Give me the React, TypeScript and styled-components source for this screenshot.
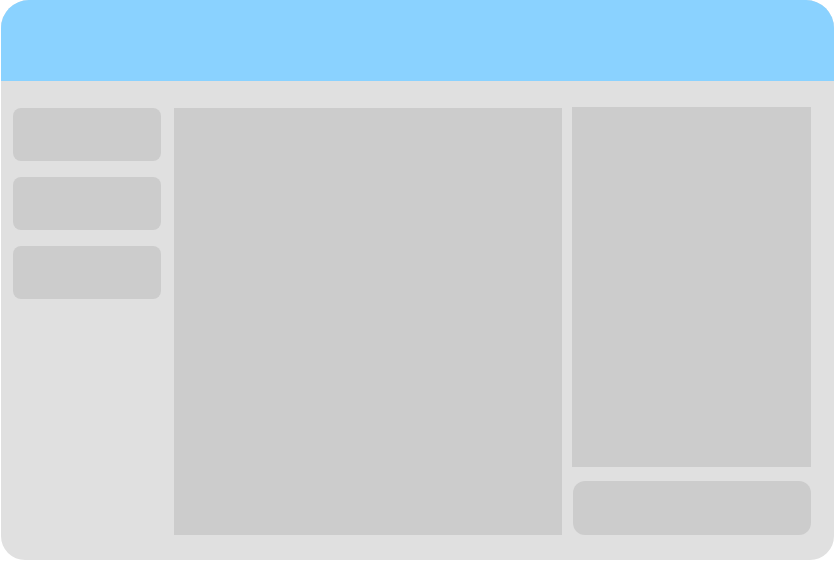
import React from 'react'
import styled, { createGlobalStyle } from 'styled-components'

const GlobalStyle = createGlobalStyle`
  html, body {
    margin: 0;
    padding: 0;
    background: #ffffff;
    font-family: 'Liberation Sans', Arial, sans-serif;
  }
`

const Window = styled.div`
  margin-left: 1px;
  width: 833px;
  height: 560px;
  border-radius: 28px 28px 24px 24px;
  overflow: hidden;
  background: #e0e0e0;
  display: flex;
  flex-direction: column;
`

const Header = styled.header`
  height: 81px;
  flex-shrink: 0;
  background: #8ad2ff;
`

const Body = styled.div`
  flex: 1;
  display: flex;
  padding: 26px 23px 25px 12px;
  min-height: 0;
`

const Sidebar = styled.nav`
  width: 148px;
  flex-shrink: 0;
  display: flex;
  flex-direction: column;
  gap: 16px;
  padding-top: 1px;
`

interface BlockProps {
  $height?: number
  $radius?: number
}

const NavButton = styled.div<BlockProps>`
  height: ${(p) => p.$height ?? 53}px;
  border-radius: ${(p) => p.$radius ?? 8}px;
  background: #cccccc;
`

const MainPanel = styled.main`
  width: 388px;
  flex-shrink: 0;
  margin: 1px 10px 0 13px;
  background: #cccccc;
`

const RightColumn = styled.aside`
  flex: 1;
  display: flex;
  flex-direction: column;
  gap: 14px;
`

const InfoPanel = styled.div`
  height: 360px;
  background: #cccccc;
`

const ActionButton = styled(NavButton)`
  margin-left: 1px;
`

const App: React.FC = () => {
  return (
    <>
      <GlobalStyle />
      <Window>
        <Header />
        <Body>
          <Sidebar>
            <NavButton />
            <NavButton />
            <NavButton />
          </Sidebar>
          <MainPanel />
          <RightColumn>
            <InfoPanel />
            <ActionButton $height={54} $radius={12} />
          </RightColumn>
        </Body>
      </Window>
    </>
  )
}

export default App
